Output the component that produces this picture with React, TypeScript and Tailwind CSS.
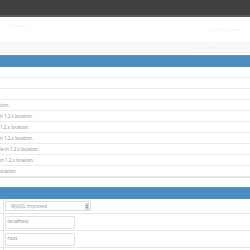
import React from "react";

const rows = ["", "", "", "tion.", "n 1.2.x location.", "1.2.x location.", "n 1.2.x location.", "le in 1.2.x location.", "in 1.2.x location.", "ocation."];

function FieldRow({ h, children }: { h: string; children: React.ReactNode }) {
  return (
    <div className={`flex items-center ${h} border-b border-[#e6e6e6]`}>
      <div className="w-[4px] self-stretch border-r border-[#e6e6e6]" />
      <div className="pl-[1px]">{children}</div>
    </div>
  );
}

export default function App() {
  return (
    <div className="w-[250px] h-[250px] overflow-hidden bg-white font-['Open_Sans',sans-serif] text-[#8a8a8a]">
      <div className="h-[17px] bg-[#404040] border-b-2 border-[#5c5c5c]" />
      <div className="h-[25px] relative text-[4px] text-[#f3f3f3]">
        <span className="absolute left-[10px] top-[6px]">Migration</span>
        <span className="absolute right-[10px] top-[10px]">Joomla upgrade</span>
      </div>
      <div className="h-[11px] bg-[#f9f9f9] border-t border-[#f1f1f1] border-b border-[#e2e2e2] flex items-center justify-end pr-[6px] text-[4px] text-[#eeeeee]">
        Home / Migration / Checks
      </div>
      <div className="h-[2px]" />
      <div className="h-[12px] bg-[#4b8cc3] border-t border-[#5c97c8]" />
      {rows.map((t, i) => (
        <div key={i} className="h-[11px] flex items-center border-b border-[#ebebeb] text-[4.5px] leading-none text-[#8c8c8c] whitespace-nowrap">
          {t}
        </div>
      ))}
      <div className="h-[10px] border-t border-[#dae4ee]" />
      <div className="h-[12px] bg-[#4b8cc3] border-t border-[#5c97c8]" />
      <FieldRow h="h-[15px]">
        <div className="w-[86px] h-[10px] border border-[#dcdcdc] rounded-[1px] flex items-center pl-[5px] pr-[1px] text-[4.5px] text-[#9a9a9a]">
          <span className="flex-1">MySQL Improved</span>
          <div className="w-[4px] h-[7px] bg-[#d8d8d8] flex flex-col items-center justify-center gap-[1px]">
            <div className="w-0 h-0 border-x-[1px] border-x-transparent border-b-[1.5px] border-b-[#555]" />
            <div className="w-0 h-0 border-x-[1px] border-x-transparent border-t-[1.5px] border-t-[#555]" />
          </div>
        </div>
      </FieldRow>
      <FieldRow h="h-[17px]">
        <div className="w-[70px] h-[13px] border border-[#e0e0e0] rounded-[1px] flex items-center pl-[1.5px] text-[5px] text-[#8a8a8a]">localhost</div>
      </FieldRow>
      <FieldRow h="h-[17px]">
        <div className="w-[70px] h-[13px] border border-[#e0e0e0] rounded-[1px] flex items-center pl-[1.5px] text-[5px] text-[#8a8a8a]">root</div>
      </FieldRow>
      <FieldRow h="h-[17px]">
        <div className="w-[70px] h-[13px] border border-[#e0e0e0] rounded-[1px]" />
      </FieldRow>
    </div>
  );
}
